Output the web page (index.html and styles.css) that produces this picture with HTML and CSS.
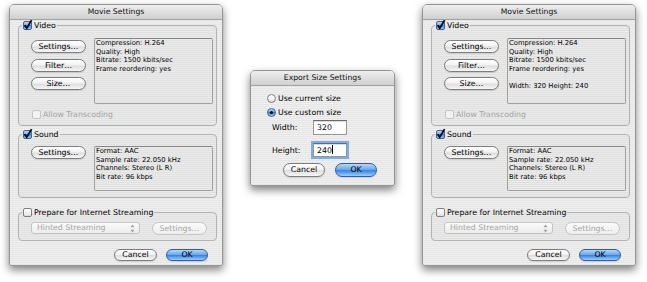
FILE: index.html
```html
<!DOCTYPE html>
<html lang="en">
<head>
  <meta charset="UTF-8">
  <title>Movie Settings</title>
  <link rel="stylesheet" href="styles.css">
</head>
<body>

  <div class="window movie">
    <div class="titlebar">Movie Settings</div>
    <div class="content">
      <fieldset class="group">
        <legend><svg class="cb"><use href="#cb-on"/></svg>Video</legend>
        <div class="group-body video">
          <div class="split">
            <div class="btn-col">
              <div class="btn">Settings…</div>
              <div class="btn">Filter…</div>
              <div class="btn">Size…</div>
            </div>
            <div class="info">Compression: H.264<br>Quality: High<br>Bitrate: 1500 kbits/sec<br>Frame reordering: yes</div>
          </div>
          <div class="option disabled"><svg class="cb"><use href="#cb-dis"/></svg>Allow Transcoding</div>
        </div>
      </fieldset>

      <fieldset class="group sound">
        <legend><svg class="cb"><use href="#cb-on"/></svg>Sound</legend>
        <div class="group-body">
          <div class="split">
            <div class="btn-col">
              <div class="btn">Settings…</div>
            </div>
            <div class="info short">Format: AAC<br>Sample rate: 22.050 kHz<br>Channels: Stereo (L R)<br>Bit rate: 96 kbps</div>
          </div>
        </div>
      </fieldset>

      <fieldset class="group streaming">
        <legend><svg class="cb"><use href="#cb-off"/></svg>Prepare for Internet Streaming</legend>
        <div class="group-body stream-row">
          <div class="popup">Hinted Streaming<svg class="arrows"><use href="#updown"/></svg></div>
          <div class="btn disabled">Settings…</div>
        </div>
      </fieldset>

      <div class="footer">
        <div class="btn">Cancel</div>
        <div class="btn default">OK</div>
      </div>
    </div>
  </div>

  <div class="window export">
    <div class="titlebar">Export Size Settings</div>
    <div class="content">
      <div class="radio-row"><svg class="rb"><use href="#rb-off"/></svg>Use current size</div>
      <div class="radio-row"><svg class="rb"><use href="#rb-on"/></svg>Use custom size</div>
      <div class="field-row">
        <span class="field-label">Width:</span>
        <div class="textfield">320</div>
      </div>
      <div class="field-row second">
        <span class="field-label">Height:</span>
        <div class="textfield focused">240<span class="caret"></span></div>
      </div>
      <div class="footer">
        <div class="btn">Cancel</div>
        <div class="btn default">OK</div>
      </div>
    </div>
  </div>

  <div class="window movie right">
    <div class="titlebar">Movie Settings</div>
    <div class="content">
      <fieldset class="group">
        <legend><svg class="cb"><use href="#cb-on"/></svg>Video</legend>
        <div class="group-body video">
          <div class="split">
            <div class="btn-col">
              <div class="btn">Settings…</div>
              <div class="btn">Filter…</div>
              <div class="btn">Size…</div>
            </div>
            <div class="info">Compression: H.264<br>Quality: High<br>Bitrate: 1500 kbits/sec<br>Frame reordering: yes<br><br>Width: 320 Height: 240</div>
          </div>
          <div class="option disabled"><svg class="cb"><use href="#cb-dis"/></svg>Allow Transcoding</div>
        </div>
      </fieldset>

      <fieldset class="group sound">
        <legend><svg class="cb"><use href="#cb-on"/></svg>Sound</legend>
        <div class="group-body">
          <div class="split">
            <div class="btn-col">
              <div class="btn">Settings…</div>
            </div>
            <div class="info short">Format: AAC<br>Sample rate: 22.050 kHz<br>Channels: Stereo (L R)<br>Bit rate: 96 kbps</div>
          </div>
        </div>
      </fieldset>

      <fieldset class="group streaming">
        <legend><svg class="cb"><use href="#cb-off"/></svg>Prepare for Internet Streaming</legend>
        <div class="group-body stream-row">
          <div class="popup">Hinted Streaming<svg class="arrows"><use href="#updown"/></svg></div>
          <div class="btn disabled">Settings…</div>
        </div>
      </fieldset>

      <div class="footer">
        <div class="btn">Cancel</div>
        <div class="btn default">OK</div>
      </div>
    </div>
  </div>

  <!-- shared control glyphs -->
  <svg class="defs" aria-hidden="true">
    <defs>
      <linearGradient id="g-blue" x1="0" y1="0" x2="0" y2="1">
        <stop offset="0" stop-color="#c6e0fa"/>
        <stop offset=".5" stop-color="#6eaaec"/>
        <stop offset=".5" stop-color="#3f86e0"/>
        <stop offset="1" stop-color="#a2d2fb"/>
      </linearGradient>
      <linearGradient id="g-white" x1="0" y1="0" x2="0" y2="1">
        <stop offset="0" stop-color="#ffffff"/>
        <stop offset=".5" stop-color="#f3f3f3"/>
        <stop offset="1" stop-color="#dcdcdc"/>
      </linearGradient>
    </defs>
    <symbol id="cb-on" viewBox="0 0 9 9" overflow="visible">
      <rect x=".5" y=".5" width="8" height="8" rx="1.5" fill="url(#g-blue)" stroke="#3f6396"/>
      <path d="M1.6 4.3 L3.7 7.1 L8.6 -0.9" fill="none" stroke="#050505" stroke-width="1.8"/>
    </symbol>
    <symbol id="cb-off" viewBox="0 0 9 9">
      <rect x=".5" y=".5" width="8" height="8" rx="1.5" fill="url(#g-white)" stroke="#7e7e7e"/>
    </symbol>
    <symbol id="cb-dis" viewBox="0 0 9 9">
      <rect x=".5" y=".5" width="8" height="8" rx="1.5" fill="#f2f2f2" stroke="#c4c4c4"/>
    </symbol>
    <symbol id="rb-off" viewBox="0 0 9 9">
      <circle cx="4.5" cy="4.5" r="4" fill="url(#g-white)" stroke="#7e7e7e"/>
    </symbol>
    <symbol id="rb-on" viewBox="0 0 9 9">
      <circle cx="4.5" cy="4.5" r="4" fill="url(#g-blue)" stroke="#3f6396"/>
      <circle cx="4.5" cy="4.5" r="1.6" fill="#050505"/>
    </symbol>
    <symbol id="updown" viewBox="0 0 5 9">
      <path d="M2.5 0.5 L4.5 3.2 L0.5 3.2 Z M0.5 5.8 L4.5 5.8 L2.5 8.5 Z" fill="#a2a2a2"/>
    </symbol>
  </svg>

</body>
</html>
```

FILE: styles.css
```css
* {
  box-sizing: border-box;
}
body {
  margin: 0;
  width: 647px;
  height: 282px;
  overflow: hidden;
  background: #fff;
  display: flex;
  align-items: flex-start;
  padding: 4px 0 0 9px;
  font-family: "DejaVu Sans", sans-serif;
  font-size: 7.8px;
  color: #000;
}

/* windows */
.window {
  background: repeating-linear-gradient(#efefef 0 1px, #e6e6e6 1px 2px);
  border: 1px solid #959595;
  border-radius: 5px 5px 2px 2px;
  box-shadow: 0 4px 9px rgba(0, 0, 0, 0.5);
  overflow: hidden;
}
.movie {
  width: 214px;
  height: 262px;
}
.export {
  width: 145px;
  height: 116px;
  margin: 66px 0 0 27px;
}
.right {
  margin-left: 27px;
}
.titlebar {
  height: 15px;
  line-height: 14px;
  text-align: center;
  font-size: 7.7px;
  color: #111;
  background: linear-gradient(#eeeeee, #d0d0d0);
  border-bottom: 1px solid #a2a2a2;
}
.movie .content {
  padding: 0 5px 0 8px;
}

/* group boxes */
.group {
  margin: 0;
  padding: 0;
  border: 1px solid #b2b2b2;
  border-radius: 4px;
  background: rgba(0, 0, 0, 0.02);
}
.group legend {
  display: flex;
  align-items: center;
  gap: 2px;
  height: 11px;
  margin-left: 3px;
  padding: 0 1px;
  white-space: nowrap;
}
.group.sound {
  margin-top: 3px;
}
.group.streaming {
  margin-top: 9px;
}
.group-body {
  padding: 6px 3px 6px 12px;
}
.group-body.video {
  padding-top: 7px;
}
.cb {
  width: 9px;
  height: 9px;
  overflow: visible;
  flex: none;
}
.split {
  display: flex;
  gap: 8px;
}
.btn-col {
  width: 55px;
  display: flex;
  flex-direction: column;
  gap: 5.5px;
}
.video .btn-col {
  padding-top: 2px;
}
.info {
  flex: 1;
  height: 66px;
  padding: 0 1px;
  border: 1px solid #a0a0a0;
  border-top-color: #858585;
  border-radius: 2px;
  font-size: 6.8px;
  line-height: 8.5px;
  white-space: nowrap;
}
.info.short {
  height: 45px;
}
.option {
  display: flex;
  align-items: center;
  gap: 2px;
  height: 10px;
  margin-top: 5px;
  padding-left: 1px;
}
.disabled {
  color: #a4a4a4;
}
.stream-row {
  display: flex;
  gap: 12px;
  padding-top: 4px;
  padding-bottom: 5px;
}

/* aqua controls */
.btn {
  height: 13px;
  line-height: 11px;
  text-align: center;
  border: 1px solid #7c7c7c;
  border-radius: 7px;
  background: linear-gradient(#ffffff, #f2f2f2 45%, #dedede 55%, #f6f6f6);
  box-shadow: 0 1px 1px rgba(0, 0, 0, 0.12);
  white-space: nowrap;
}
.btn.disabled {
  width: 55px;
  border-color: #c4c4c4;
  box-shadow: none;
  background: linear-gradient(#fafafa, #eeeeee);
}
.btn.default {
  border-color: #2f5e9f;
  background: linear-gradient(#b3d8fa, #6eaaee 45%, #3b84e2 55%, #9ccffb);
}
.popup {
  width: 109px;
  height: 12px;
  line-height: 10px;
  padding-left: 5px;
  display: flex;
  align-items: center;
  justify-content: space-between;
  padding-right: 4px;
  color: #a4a4a4;
  border: 1px solid #c4c4c4;
  border-radius: 3px;
  background: linear-gradient(#fbfbfb, #ececec);
}
.arrows {
  width: 5px;
  height: 9px;
}
.footer {
  display: flex;
  justify-content: flex-end;
  gap: 9px;
}
.movie .footer {
  margin-top: 8px;
  padding-right: 9px;
}
.movie .footer .btn {
  height: 12px;
  line-height: 10px;
}
.movie .footer .btn:first-child {
  width: 43px;
}
.movie .footer .btn.default {
  width: 42px;
}

/* export size dialog */
.export .content {
  padding: 5px 17px 0 16px;
}
.radio-row {
  display: flex;
  align-items: center;
  gap: 2px;
  height: 14px;
}
.rb {
  width: 9px;
  height: 9px;
  flex: none;
}
.field-row {
  display: flex;
  align-items: center;
  margin-top: 1px;
  padding-left: 5px;
}
.field-row.second {
  margin-top: 8px;
}
.field-label {
  width: 41px;
}
.textfield {
  width: 34px;
  height: 15px;
  line-height: 13px;
  padding-left: 3px;
  background: #fff;
  border: 1px solid #959595;
  border-top-color: #6a6a6a;
  box-shadow: inset 0 1px 1px rgba(0, 0, 0, 0.15);
}
.textfield.focused {
  height: 14px;
  box-shadow: 0 0 0 2px #7dade6, inset 0 1px 1px rgba(0, 0, 0, 0.15);
}
.caret {
  display: inline-block;
  width: 1px;
  height: 9px;
  background: #000;
  vertical-align: -1px;
}
.export .footer {
  margin-top: 6px;
  gap: 10px;
}
.export .footer .btn {
  width: 42px;
  height: 14px;
  line-height: 12px;
}

.defs {
  width: 0;
  height: 0;
  overflow: hidden;
}
```
